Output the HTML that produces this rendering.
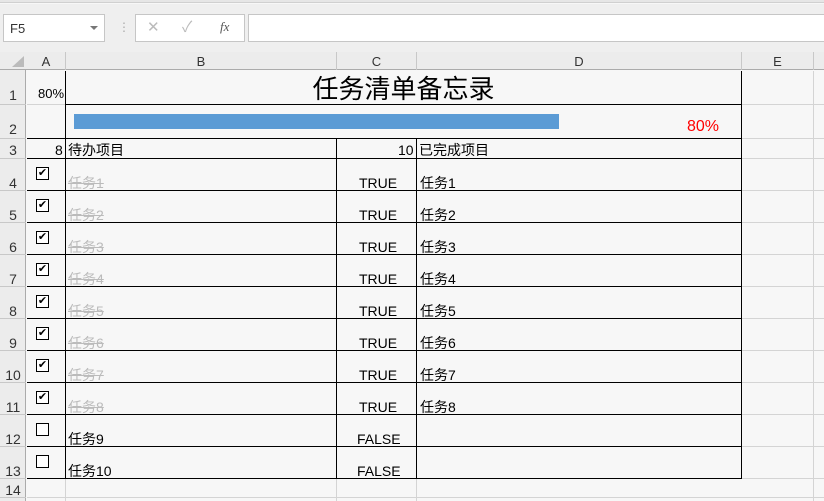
<!DOCTYPE html>
<html><head><meta charset="utf-8"><style>
*{margin:0;padding:0;box-sizing:border-box}
body{width:824px;height:501px;overflow:hidden;background:#f7f7f7;position:relative;font-family:"Liberation Sans","Noto Sans CJK SC",sans-serif;font-size:14px;color:#000}
.a{position:absolute}
.hl{position:absolute;height:1px;background:#d4d4d4}
.vl{position:absolute;width:1px;background:#d4d4d4}
.bh{position:absolute;height:1px;background:#000}
.bv{position:absolute;width:1px;background:#000}
.hd{position:absolute;color:#333;font-size:13px;text-align:center}
.cb{position:absolute;width:13px;height:13px;border:1px solid #000;background:#fff;font-size:11px;line-height:11px;text-align:center}
.t{position:absolute;font-size:14px;line-height:16px;white-space:nowrap}
.s{color:#bbb;text-decoration:line-through}
</style></head><body>
<div class="a" style="left:0;top:0;width:824px;height:3px;background:#e6e6e6;border-bottom:1px solid #d0d0d0"></div>
<div class="a" style="left:0;top:4px;width:824px;height:48px;background:#efefef"></div>
<div class="a" style="left:3px;top:14px;width:102px;height:28px;background:#fff;border:1px solid #c6c6c6"></div>
<div class="t" style="left:10px;top:21px;font-size:13px;color:#333">F5</div>
<div class="a" style="left:90px;top:26px;width:0;height:0;border-left:4px solid transparent;border-right:4px solid transparent;border-top:4px solid #777"></div>
<div class="t" style="left:118px;top:19px;color:#aaa;font-size:12px">⋮</div>
<div class="a" style="left:135px;top:14px;width:110px;height:28px;background:#fff;border:1px solid #c6c6c6"></div>
<div class="t" style="left:147px;top:20px;color:#bbb;font-size:15px">✕</div>
<div class="t" style="left:182px;top:20px;color:#bbb;font-size:15px">✓</div>
<div class="t" style="left:220px;top:19px;color:#555;font-size:13px;font-style:italic;font-family:'Liberation Serif',serif">fx</div>
<div class="a" style="left:248px;top:14px;width:580px;height:28px;background:#fff;border:1px solid #c6c6c6"></div>
<!-- headers -->
<div class="a" style="left:0;top:52px;width:824px;height:18px;background:#ececec;border-bottom:1px solid #ababab"></div>
<div class="a" style="left:0;top:70px;width:26px;height:431px;background:#ececec;border-right:1px solid #ababab"></div>
<div class="a" style="left:12px;top:56px;width:0;height:0;border-left:12px solid transparent;border-bottom:11px solid #bbb"></div>
<div class="vl" style="left:65px;top:52px;height:18px;background:#c8c8c8"></div>
<div class="vl" style="left:336px;top:52px;height:18px;background:#c8c8c8"></div>
<div class="vl" style="left:416px;top:52px;height:18px;background:#c8c8c8"></div>
<div class="vl" style="left:741px;top:52px;height:18px;background:#c8c8c8"></div>
<div class="vl" style="left:813px;top:52px;height:18px;background:#c8c8c8"></div>
<div class="hd" style="left:27px;top:54px;width:38px">A</div>
<div class="hd" style="left:66px;top:54px;width:270px">B</div>
<div class="hd" style="left:337px;top:54px;width:79px">C</div>
<div class="hd" style="left:417px;top:54px;width:324px">D</div>
<div class="hd" style="left:742px;top:54px;width:71px">E</div>
<!-- row header numbers -->
<div class="hd" style="left:0;top:87px;width:26px;font-size:14px">1</div>
<div class="hd" style="left:0;top:121px;width:26px;font-size:14px">2</div>
<div class="hd" style="left:0;top:142px;width:26px;font-size:14px">3</div>
<div class="hd" style="left:0;top:175px;width:26px;font-size:14px">4</div>
<div class="hd" style="left:0;top:207px;width:26px;font-size:14px">5</div>
<div class="hd" style="left:0;top:239px;width:26px;font-size:14px">6</div>
<div class="hd" style="left:0;top:271px;width:26px;font-size:14px">7</div>
<div class="hd" style="left:0;top:303px;width:26px;font-size:14px">8</div>
<div class="hd" style="left:0;top:335px;width:26px;font-size:14px">9</div>
<div class="hd" style="left:0;top:367px;width:26px;font-size:14px">10</div>
<div class="hd" style="left:0;top:399px;width:26px;font-size:14px">11</div>
<div class="hd" style="left:0;top:431px;width:26px;font-size:14px">12</div>
<div class="hd" style="left:0;top:463px;width:26px;font-size:14px">13</div>
<div class="hd" style="left:0;top:482px;width:26px;font-size:14px">14</div>
<!-- row header separators -->
<div class="hl" style="left:0;top:104px;width:26px;background:#c8c8c8"></div>
<div class="hl" style="left:0;top:138px;width:26px;background:#c8c8c8"></div>
<div class="hl" style="left:0;top:158px;width:26px;background:#c8c8c8"></div>
<div class="hl" style="left:0;top:190px;width:26px;background:#c8c8c8"></div>
<div class="hl" style="left:0;top:222px;width:26px;background:#c8c8c8"></div>
<div class="hl" style="left:0;top:254px;width:26px;background:#c8c8c8"></div>
<div class="hl" style="left:0;top:286px;width:26px;background:#c8c8c8"></div>
<div class="hl" style="left:0;top:318px;width:26px;background:#c8c8c8"></div>
<div class="hl" style="left:0;top:350px;width:26px;background:#c8c8c8"></div>
<div class="hl" style="left:0;top:382px;width:26px;background:#c8c8c8"></div>
<div class="hl" style="left:0;top:414px;width:26px;background:#c8c8c8"></div>
<div class="hl" style="left:0;top:446px;width:26px;background:#c8c8c8"></div>
<div class="hl" style="left:0;top:478px;width:26px;background:#c8c8c8"></div>
<div class="hl" style="left:0;top:497px;width:26px;background:#c8c8c8"></div>
<!-- light grid -->
<div class="vl" style="left:65px;top:71px;height:430px"></div>
<div class="vl" style="left:336px;top:479px;height:22px"></div>
<div class="vl" style="left:416px;top:479px;height:22px"></div>
<div class="vl" style="left:813px;top:71px;height:430px"></div>
<div class="hl" style="left:27px;top:104px;width:38px"></div>
<div class="hl" style="left:742px;top:104px;width:82px"></div>
<div class="hl" style="left:742px;top:138px;width:82px"></div>
<div class="hl" style="left:742px;top:158px;width:82px"></div>
<div class="hl" style="left:742px;top:190px;width:82px"></div>
<div class="hl" style="left:742px;top:222px;width:82px"></div>
<div class="hl" style="left:742px;top:254px;width:82px"></div>
<div class="hl" style="left:742px;top:286px;width:82px"></div>
<div class="hl" style="left:742px;top:318px;width:82px"></div>
<div class="hl" style="left:742px;top:350px;width:82px"></div>
<div class="hl" style="left:742px;top:382px;width:82px"></div>
<div class="hl" style="left:742px;top:414px;width:82px"></div>
<div class="hl" style="left:742px;top:446px;width:82px"></div>
<div class="hl" style="left:742px;top:478px;width:82px"></div>
<div class="hl" style="left:27px;top:497px;width:797px"></div>
<div class="hl" style="left:27px;top:138px;width:38px"></div>
<!-- black borders -->
<div class="bv" style="left:65px;top:71px;height:408px"></div>
<div class="bv" style="left:741px;top:71px;height:408px"></div>
<div class="bv" style="left:336px;top:138px;height:341px"></div>
<div class="bv" style="left:416px;top:138px;height:341px"></div>
<div class="bh" style="left:65px;top:104px;width:677px"></div>
<div class="bh" style="left:27px;top:138px;width:715px"></div>
<div class="bh" style="left:27px;top:158px;width:715px"></div>
<div class="bh" style="left:27px;top:190px;width:715px"></div>
<div class="bh" style="left:27px;top:222px;width:715px"></div>
<div class="bh" style="left:27px;top:254px;width:715px"></div>
<div class="bh" style="left:27px;top:286px;width:715px"></div>
<div class="bh" style="left:27px;top:318px;width:715px"></div>
<div class="bh" style="left:27px;top:350px;width:715px"></div>
<div class="bh" style="left:27px;top:382px;width:715px"></div>
<div class="bh" style="left:27px;top:414px;width:715px"></div>
<div class="bh" style="left:27px;top:446px;width:715px"></div>
<div class="bh" style="left:27px;top:478px;width:715px"></div>
<!-- content -->
<div class="t" style="left:38px;top:86px;font-size:13px">80%</div>
<div class="t" style="left:66px;top:74px;width:675px;text-align:center;font-size:26px;line-height:30px">任务清单备忘录</div>
<div class="a" style="left:74px;top:114px;width:485px;height:15px;background:#5b9bd5"></div>
<div class="t" style="left:687px;top:119px;font-size:16px;color:#f00">80%</div>
<div class="t" style="left:55px;top:142px">8</div>
<div class="t" style="left:68px;top:142px">待办项目</div>
<div class="t" style="left:398px;top:142px">10</div>
<div class="t" style="left:419px;top:142px">已完成项目</div>

<div class="cb" style="left:36px;top:167px">✔</div><div class="t s" style="left:68px;top:175px">任务1</div><div class="t" style="left:359px;top:175px">TRUE</div><div class="t" style="left:420px;top:175px">任务1</div>
<div class="cb" style="left:36px;top:199px">✔</div><div class="t s" style="left:68px;top:207px">任务2</div><div class="t" style="left:359px;top:207px">TRUE</div><div class="t" style="left:420px;top:207px">任务2</div>
<div class="cb" style="left:36px;top:231px">✔</div><div class="t s" style="left:68px;top:239px">任务3</div><div class="t" style="left:359px;top:239px">TRUE</div><div class="t" style="left:420px;top:239px">任务3</div>
<div class="cb" style="left:36px;top:263px">✔</div><div class="t s" style="left:68px;top:271px">任务4</div><div class="t" style="left:359px;top:271px">TRUE</div><div class="t" style="left:420px;top:271px">任务4</div>
<div class="cb" style="left:36px;top:295px">✔</div><div class="t s" style="left:68px;top:303px">任务5</div><div class="t" style="left:359px;top:303px">TRUE</div><div class="t" style="left:420px;top:303px">任务5</div>
<div class="cb" style="left:36px;top:327px">✔</div><div class="t s" style="left:68px;top:335px">任务6</div><div class="t" style="left:359px;top:335px">TRUE</div><div class="t" style="left:420px;top:335px">任务6</div>
<div class="cb" style="left:36px;top:359px">✔</div><div class="t s" style="left:68px;top:367px">任务7</div><div class="t" style="left:359px;top:367px">TRUE</div><div class="t" style="left:420px;top:367px">任务7</div>
<div class="cb" style="left:36px;top:391px">✔</div><div class="t s" style="left:68px;top:399px">任务8</div><div class="t" style="left:359px;top:399px">TRUE</div><div class="t" style="left:420px;top:399px">任务8</div>
<div class="cb" style="left:36px;top:423px"></div><div class="t" style="left:68px;top:431px">任务9</div><div class="t" style="left:357px;top:431px">FALSE</div>
<div class="cb" style="left:36px;top:455px"></div><div class="t" style="left:68px;top:463px">任务10</div><div class="t" style="left:357px;top:463px">FALSE</div>
</body></html>
